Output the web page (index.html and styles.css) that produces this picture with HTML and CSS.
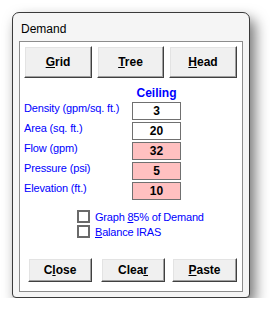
FILE: index.html
```html
<!DOCTYPE HTML>
<html>
<head>
<meta charset="utf-8">
<title>Demand</title>
<link rel="stylesheet" href="styles.css">
</head>

<body>
<div class="window">
	<div class="title">Demand</div>
	<div class="client">
		<div class="tabs">
			<button class="btn w68"><u>G</u>rid</button>
			<button class="btn w67"><u>T</u>ree</button>
			<button class="btn w68"><u>H</u>ead</button>
		</div>
		<div class="table">
			<span></span><div class="head">Ceiling</div>
			<div class="label">Density (gpm/sq. ft.)</div><div class="val">3</div>
			<div class="label">Area (sq. ft.)</div><div class="val">20</div>
			<div class="label">Flow (gpm)</div><div class="val pink">32</div>
			<div class="label">Pressure (psi)</div><div class="val pink">5</div>
			<div class="label">Elevation (ft.)</div><div class="val pink">10</div>
		</div>
		<div class="checks">
			<div class="check"><span class="box"></span><span>Graph <u>8</u>5% of Demand</span></div>
			<div class="check"><span class="box"></span><span><u>B</u>alance IRAS</span></div>
		</div>
		<div class="actions">
			<button class="btn small w64">C<u>l</u>ose</button>
			<button class="btn small w64 gap9">Clea<u>r</u></button>
			<button class="btn small w65 gap7"><u>P</u>aste</button>
		</div>
	</div>
</div>
</body>
</html>
```

FILE: styles.css
```css
body {
	margin: 0px;
	padding: 0px;
	background: #fff;
	font-family: "Liberation Sans", Arial, sans-serif;
}
.window {
	box-sizing: border-box;
	width: 238px;
	height: 286px;
	margin: 12px 0 0 12px;
	padding: 0 6px 5px 6px;
	background: #f5f5f5;
	border: 1px solid #3a3a3a;
	border-radius: 7px 7px 4px 4px;
	box-shadow: 5px 7px 14px rgba(0, 0, 0, 0.55);
}
.title {
	height: 28px;
	padding-left: 2px;
	font-size: 12px;
	line-height: 20px;
	padding-top: 6px;
	box-sizing: border-box;
	color: #000;
}
.client {
	box-sizing: border-box;
	width: 224px;
	height: 251px;
	background: #fff;
	border: 1px solid #8c8c8c;
	padding: 4px 0 0 4px;
}
.tabs {
	display: flex;
	gap: 5px;
}
.btn {
	box-sizing: border-box;
	height: 32px;
	padding: 0;
	background: #f0f0f0;
	border: 1px solid;
	border-color: #ffffff #404040 #404040 #ffffff;
	box-shadow: inset -1px -1px #a0a0a0, inset 1px 1px #e3e3e3;
	font-family: "Liberation Sans", Arial, sans-serif;
	font-weight: bold;
	font-size: 12px;
	color: #000;
}
.btn.small {
	height: 24px;
}
.w64 { width: 64px; }
.w65 { width: 65px; }
.w67 { width: 67px; }
.w68 { width: 68px; }
.table {
	display: grid;
	grid-template-columns: 108px 49px;
	grid-template-rows: 14px;
	grid-auto-rows: 18px;
	row-gap: 2px;
	margin-top: 8px;
}
.head {
	text-align: center;
	color: #0000ff;
	font-weight: bold;
	font-size: 12px;
	line-height: 14px;
}
.label {
	color: #0000ff;
	font-size: 11px;
	letter-spacing: -0.15px;
	line-height: 13px;
}
.val {
	box-sizing: border-box;
	border: 1px solid #707070;
	background: #fff;
	text-align: center;
	font-weight: bold;
	font-size: 12px;
	line-height: 16px;
}
.val.pink {
	background: #ffc0c0;
}
.checks {
	margin: 9px 0 0 53px;
}
.check {
	display: flex;
	align-items: center;
	height: 15px;
	gap: 5px;
	color: #0000ff;
	font-size: 11px;
	letter-spacing: -0.2px;
}
.box {
	box-sizing: border-box;
	width: 13px;
	height: 13px;
	border: 2px solid #6a6a6a;
	background: #fff;
}
.actions {
	display: flex;
	margin: 19px 0 0 4px;
}
.gap9 { margin-left: 9px; }
.gap7 { margin-left: 7px; }
```
